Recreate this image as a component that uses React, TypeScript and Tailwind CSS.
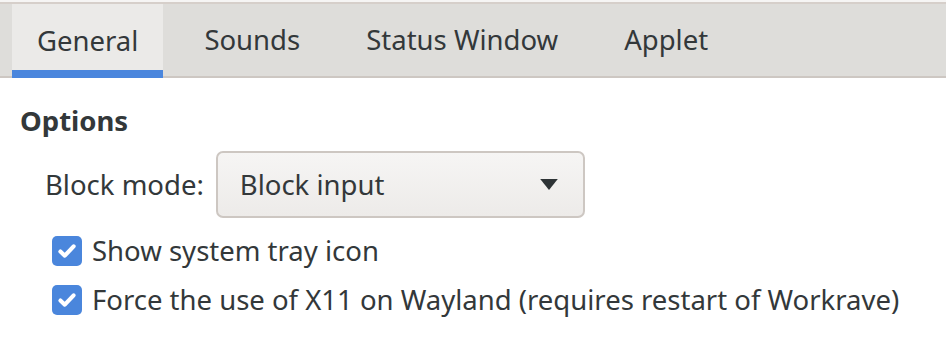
import { useState } from "react";

const TABS = ["General", "Sounds", "Status Window", "Applet"];

function CheckMark() {
  return (
    <svg viewBox="0 0 16 16" className="h-[22px] w-[22px]">
      <path
        d="M3.2 8.4 L6.4 11.4 L12.8 4.6"
        fill="none"
        stroke="white"
        strokeWidth="3"
        strokeLinecap="round"
        strokeLinejoin="round"
      />
    </svg>
  );
}

function Check({ label }: { label: string }) {
  return (
    <div className="flex h-[49px] items-center gap-[10px] pl-[52px]">
      <span className="flex h-[30px] w-[30px] items-center justify-center rounded-[5px] bg-[#4a86dc]">
        <CheckMark />
      </span>
      <span>{label}</span>
    </div>
  );
}

export default function App() {
  const [active, setActive] = useState(0);

  return (
    <div
      className="h-[340px] w-[946px] overflow-hidden bg-white text-[27.5px] text-[#33383a]"
      style={{ fontFamily: '"Noto Sans", "Open Sans", sans-serif' }}
    >
      <div className="h-[2px] bg-[#f6f5f4]" />
      {/* Tab bar */}
      <div className="flex h-[76px] gap-4 border-t-2 border-[#d6cfca] bg-[#deddda] pl-3 shadow-[inset_0_-2px_0_#cdc7c2]">
        {TABS.map((t, i) => (
          <button
            key={t}
            onClick={() => setActive(i)}
            className={
              i === active
                ? "flex h-full items-center border-b-8 border-[#4a86dd] bg-[#ebeae8] px-[25px] pt-[8px]"
                : "flex h-full items-center px-[25px] pb-[2px]"
            }
          >
            {t}
          </button>
        ))}
      </div>

      {/* Options */}
      <div className="px-5 pt-[26px]">
        <div className="font-bold leading-[34px]">Options</div>
      </div>
      <div className="mt-[13px] flex items-center gap-[12px] pl-[45px]">
        <span>Block mode:</span>
        <div className="flex h-[67px] w-[369px] items-center justify-between rounded-[7px] border-2 border-[#cdc7c2] bg-gradient-to-b from-[#f6f5f4] to-[#edebe9] pl-[22px] pr-[24px]">
          <span>Block input</span>
          <svg viewBox="0 0 16 10" className="h-[11px] w-[20px]">
            <path d="M0 0 L16 0 L8 10 Z" fill="#2e3436" />
          </svg>
        </div>
      </div>
      <div className="mt-[8px]">
        <Check label="Show system tray icon" />
        <Check label="Force the use of X11 on Wayland (requires restart of Workrave)" />
      </div>
    </div>
  );
}
